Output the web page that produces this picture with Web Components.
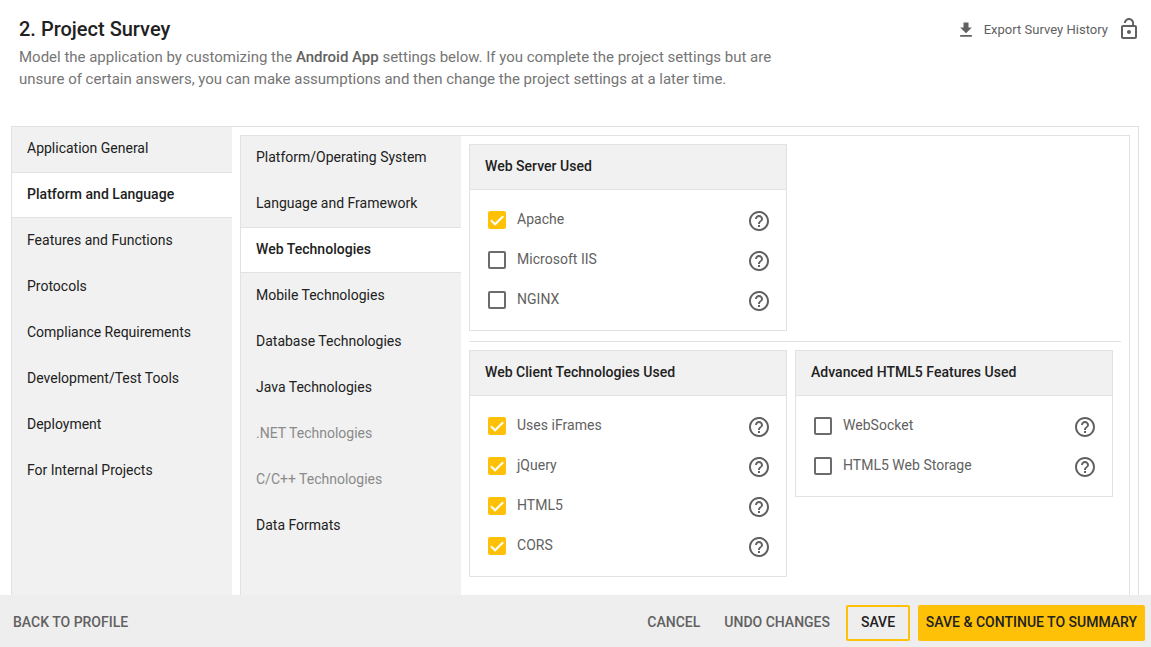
<!DOCTYPE html>
<html lang="en">
<head>
<meta charset="utf-8">
<title>Project Survey</title>
<style>
html,body{margin:0;height:100%;overflow:hidden;background:#fff}
body{font-family:Roboto,"Liberation Sans",sans-serif;font-size:14px;color:#212121;--line:#e2e2e2;--panel:#f1f1f1;--grey:#616161;--amber:#ffc107}
</style>
</head>
<body>
<survey-page>
  <survey-header slot="header" heading="2. Project Survey" action="Export Survey History">Model the application by customizing the <b style="font-weight:500;color:#616161">Android App</b> settings below. If you complete the project settings but are<br>unsure of certain answers, you can make assumptions and then change the project settings at a later time.</survey-header>
  <tab-frame>
    <nav-item slot="tabs">Application General</nav-item>
    <nav-item slot="tabs" active>Platform and Language</nav-item>
    <nav-item slot="tabs">Features and Functions</nav-item>
    <nav-item slot="tabs">Protocols</nav-item>
    <nav-item slot="tabs">Compliance Requirements</nav-item>
    <nav-item slot="tabs">Development/Test Tools</nav-item>
    <nav-item slot="tabs">Deployment</nav-item>
    <nav-item slot="tabs">For Internal Projects</nav-item>
    <tab-frame>
      <nav-item slot="tabs">Platform/Operating System</nav-item>
      <nav-item slot="tabs">Language and Framework</nav-item>
      <nav-item slot="tabs" active>Web Technologies</nav-item>
      <nav-item slot="tabs">Mobile Technologies</nav-item>
      <nav-item slot="tabs">Database Technologies</nav-item>
      <nav-item slot="tabs">Java Technologies</nav-item>
      <nav-item slot="tabs" disabled>.NET Technologies</nav-item>
      <nav-item slot="tabs" disabled>C/C++ Technologies</nav-item>
      <nav-item slot="tabs">Data Formats</nav-item>
      <card-row>
        <option-card heading="Web Server Used">
          <check-option checked>Apache</check-option>
          <check-option>Microsoft IIS</check-option>
          <check-option>NGINX</check-option>
        </option-card>
      </card-row>
      <card-row divided>
        <option-card heading="Web Client Technologies Used">
          <check-option checked>Uses iFrames</check-option>
          <check-option checked>jQuery</check-option>
          <check-option checked>HTML5</check-option>
          <check-option checked>CORS</check-option>
        </option-card>
        <option-card heading="Advanced HTML5 Features Used">
          <check-option>WebSocket</check-option>
          <check-option>HTML5 Web Storage</check-option>
        </option-card>
      </card-row>
    </tab-frame>
  </tab-frame>
  <action-bar slot="footer">
    <action-button slot="start">BACK TO PROFILE</action-button>
    <action-button>CANCEL</action-button>
    <action-button>UNDO CHANGES</action-button>
    <action-button kind="outline">SAVE</action-button>
    <action-button kind="solid">SAVE &amp; CONTINUE TO SUMMARY</action-button>
  </action-bar>
</survey-page>
<script>
const define = (name, render) => customElements.define(name, class extends HTMLElement {
  connectedCallback() {
    if (this.shadowRoot) return;
    const t = document.createElement('template');
    t.innerHTML = render(this);
    this.attachShadow({mode: 'open'}).append(t.content.cloneNode(true));
  }
});

define('survey-page', () => `<style>
:host{display:flex;flex-direction:column;height:100vh}
main{flex:1;min-height:0;overflow:hidden;display:flex;padding:0 12px 0 11px}
main ::slotted(*){flex:1}
</style><slot name="header"></slot><main><slot></slot></main><slot name="footer"></slot>`);

define('survey-header', el => `<style>
:host{display:flex;justify-content:space-between;height:126px;box-sizing:border-box;padding:15px 10px 0 19px;flex:none}
h1{margin:1px 0 0;font-size:20px;line-height:26px;font-weight:500;color:#212121}
p{margin:4px 0 0;font-size:15px;line-height:22px;letter-spacing:-.008px;color:#757575;white-space:nowrap}
.export{display:flex;align-items:center;height:28px;color:#616161;font-size:13px;letter-spacing:.02px}
.export span{margin:0 9px 0 8px}
svg{display:block;fill:#616161}
.dl{margin-top:2px}
</style><div><h1>${el.getAttribute('heading')}</h1><p><slot></slot></p></div>
<div class="export"><svg class="dl" width="20" height="20" viewBox="0 0 24 24"><path d="M19 9h-4V3H9v6H5l7 7 7-7zM5 18v2h14v-2H5z"/></svg><span>${el.getAttribute('action')}</span><svg width="24" height="24" viewBox="0 0 24 24"><path d="M12 17c1.1 0 2-.9 2-2s-.9-2-2-2-2 .9-2 2 .9 2 2 2zm6-9h-1V6c0-2.76-2.24-5-5-5S7 3.240 7 6h1.900c0-1.710 1.390-3.100 3.100-3.100s3.100 1.390 3.100 3.100v2H6c-1.100 0-2 .9-2 2v10c0 1.100.9 2 2 2h12c1.100 0 2-.9 2-2V10c0-1.100-.9-2-2-2zm0 12H6V10h12v10z"/></svg></div>`);

define('tab-frame', () => `<style>
:host{display:flex;border:1px solid var(--line);box-sizing:border-box;height:700px}
nav{width:220px;flex:none;background:var(--panel)}
section{flex:1;min-width:0;padding:8px}
</style><nav><slot name="tabs"></slot></nav><section><slot></slot></section>`);

define('nav-item', () => `<style>
:host{display:flex;align-items:center;box-sizing:border-box;height:46px;padding:0 15px 3px;color:#212121;white-space:nowrap}
:host(:first-child){height:45px;padding-bottom:4px}
:host([active]){background:#fff;border:solid var(--line);border-width:1px 0;font-weight:500;letter-spacing:.03px;padding-bottom:3px}
:host([disabled]){color:#8a8a8a}
</style><slot></slot>`);

define('card-row', () => `<style>
:host{display:flex;align-items:flex-start;gap:8px}
:host([divided]){border-top:1px solid var(--line);margin-top:10px;padding-top:8px}
</style><slot></slot>`);

define('option-card', el => `<style>
:host{display:block;width:318px;box-sizing:border-box;border:1px solid var(--line)}
h2{margin:0;font-size:14px;font-weight:500;letter-spacing:.02px;line-height:43px;height:44px;padding:0 15px;background:var(--panel);border-bottom:1px solid var(--line)}
div{padding:10px 0}
</style><h2>${el.getAttribute('heading')}</h2><div><slot></slot></div>`);

define('check-option', el => `<style>
:host{display:flex;align-items:center;height:40px;padding:0 15px 0 18px;color:var(--grey);letter-spacing:.02px}
.box{width:18px;height:18px;box-sizing:border-box;border:2px solid #6b6b6b;border-radius:2px;flex:none}
:host([checked]) .box{border:0;background:var(--amber)}
.box svg{display:none;width:18px;height:18px}
:host([checked]) .box svg{display:block}
label{flex:1;margin-left:11px;padding-bottom:2px}
.help{width:24px;height:24px;fill:#616161;margin-top:2px}
</style><span class="box"><svg viewBox="0 0 18 18"><path d="M3 9.200l4.100 4.100L15.200 5.200" fill="none" stroke="#fff" stroke-width="2"/></svg></span><label><slot></slot></label><svg class="help" viewBox="0 0 24 24"><path d="M11 18h2v-2h-2v2zm1-16C6.480 2 2 6.480 2 12s4.480 10 10 10 10-4.480 10-10S17.520 2 12 2zm0 18c-4.410 0-8-3.590-8-8s3.590-8 8-8 8 3.590 8 8-3.590 8-8 8zm0-14c-2.210 0-4 1.790-4 4h2c0-1.100.9-2 2-2s2 .9 2 2c0 2-3 1.750-3 5h2c0-2.250 3-2.500 3-5 0-2.210-1.790-4-4-4z"/></svg>`);

define('action-bar', () => `<style>
:host{display:flex;align-items:center;gap:8px;height:52px;box-sizing:border-box;padding:7px 6px 3px 5px;background:#eee;flex:none}
.space{flex:1}
</style><slot name="start"></slot><span class="space"></span><slot></slot>`);

define('action-button', () => `<style>
:host{display:flex;align-items:center;justify-content:center;height:36px;box-sizing:border-box;padding:0 8px 2px;border-radius:2px;font-weight:500;color:var(--grey);white-space:nowrap}
:host([kind=outline]){width:64px;border:2px solid var(--amber);color:#212121;padding:0 0 2px}
:host([kind=solid]){width:227px;background:var(--amber);color:#212121;padding:0 0 2px}
</style><slot></slot>`);
</script>
</body>
</html>
